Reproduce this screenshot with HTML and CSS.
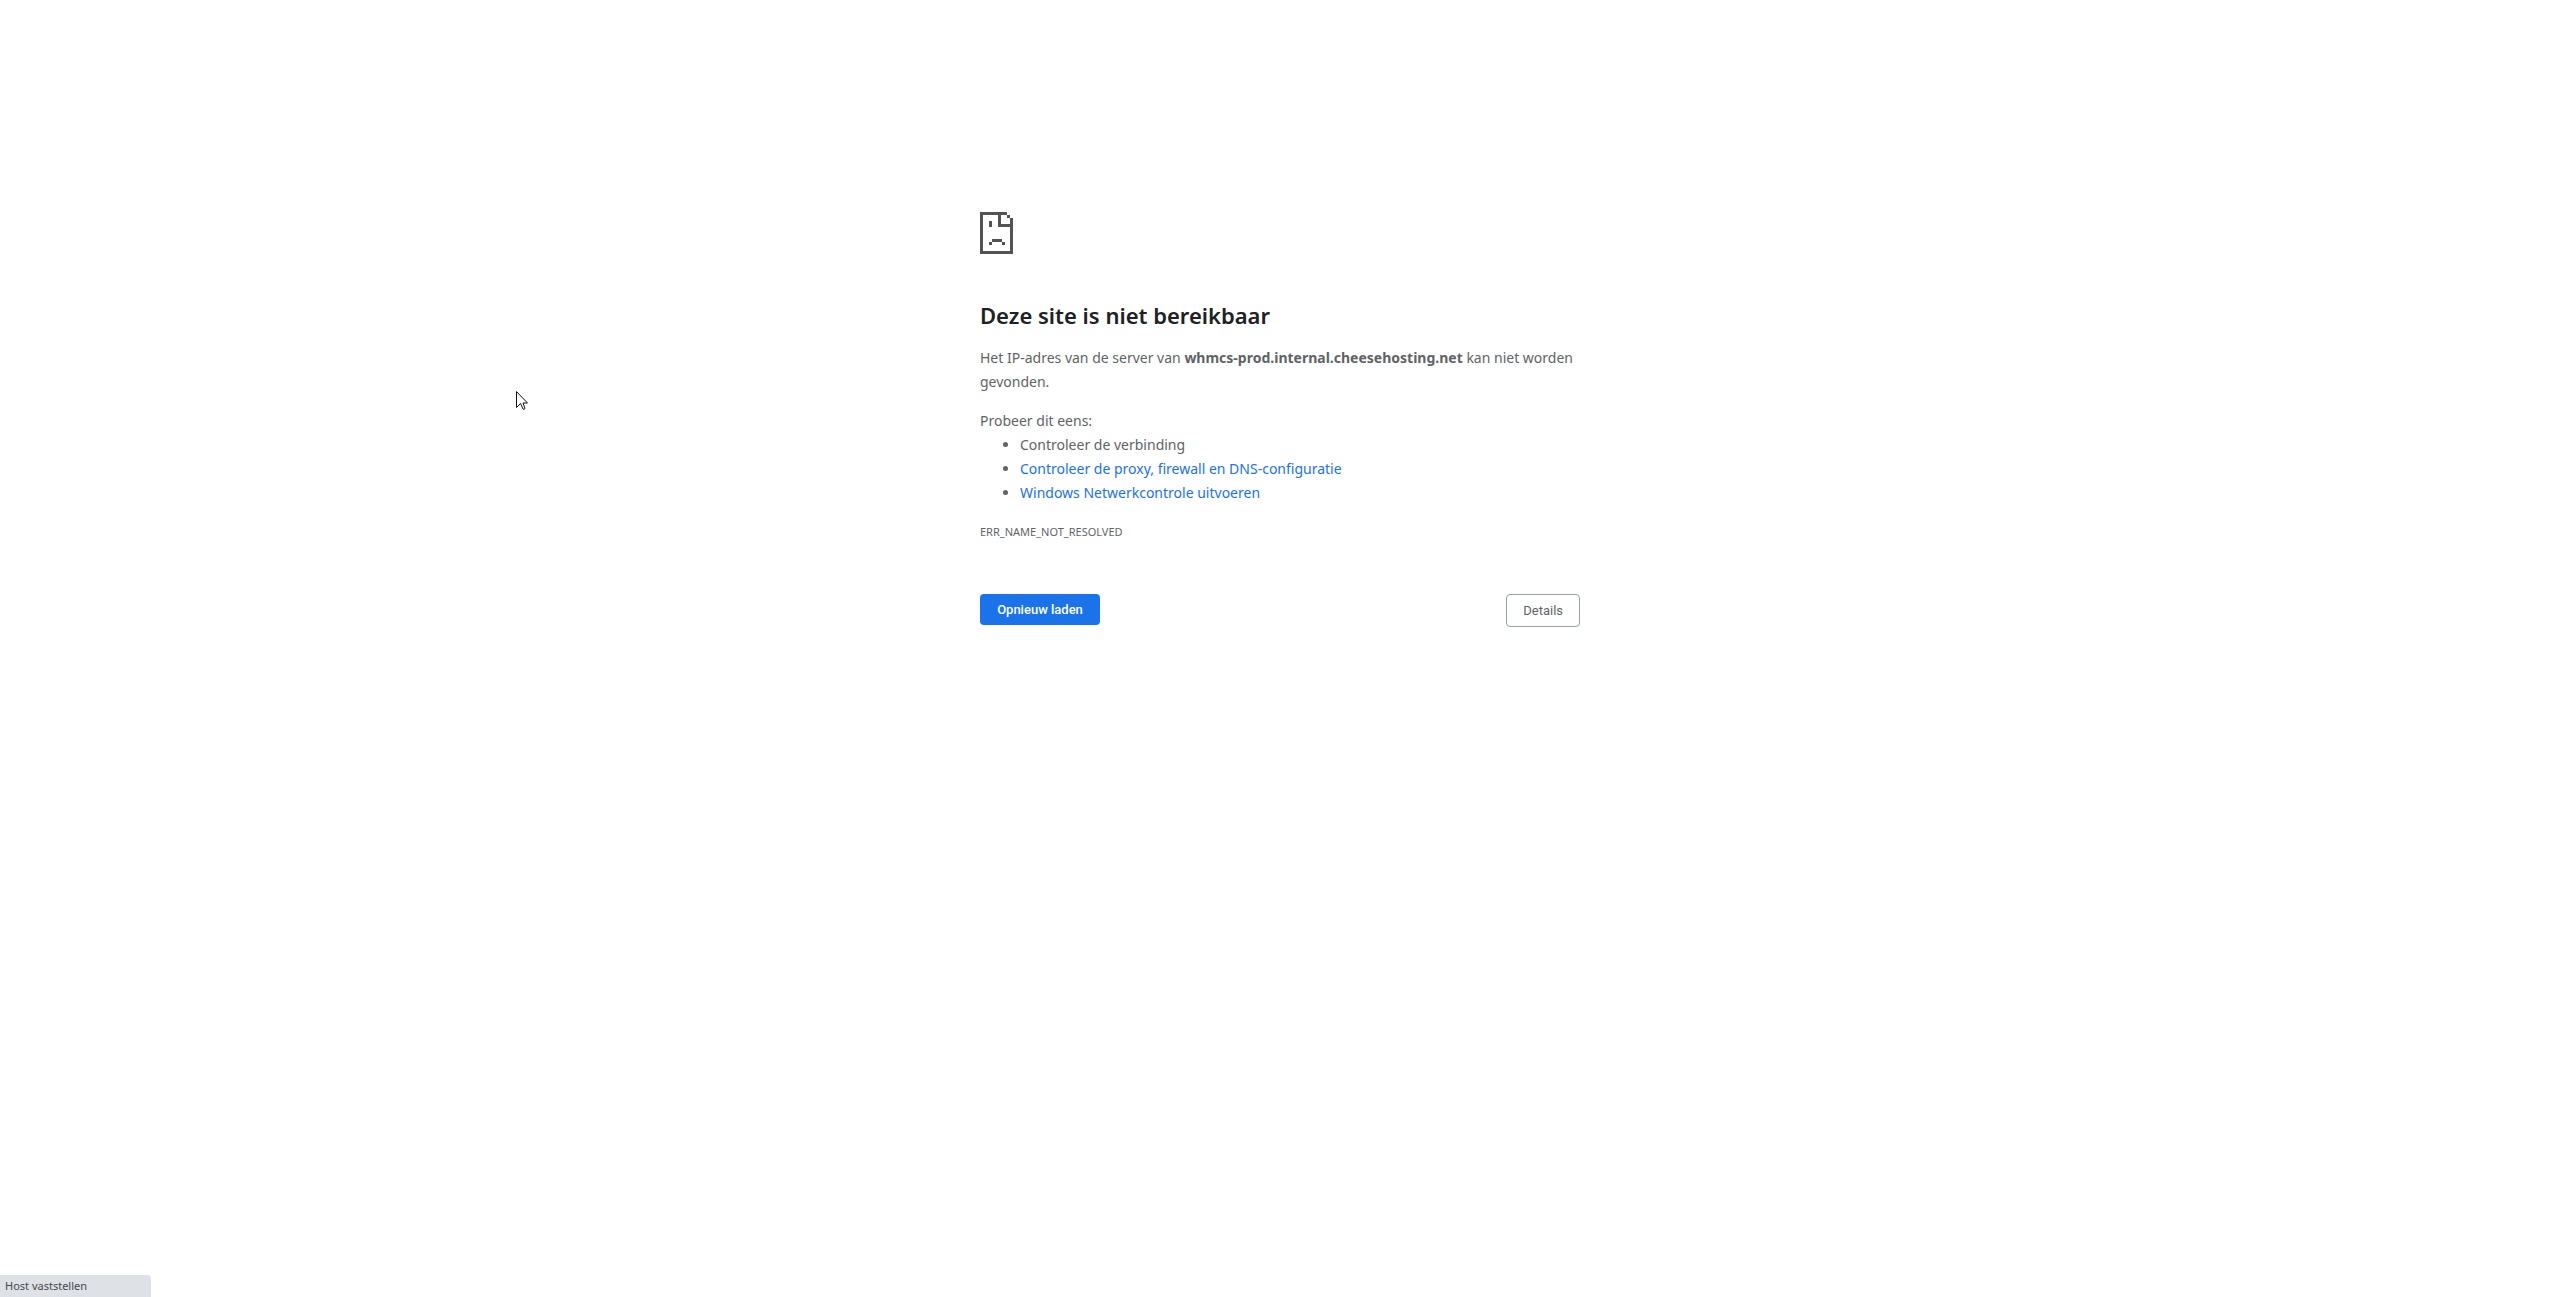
FILE: index.html
```html
<!DOCTYPE html>
<html lang="nl">
<head>
<meta charset="utf-8">
<meta name="viewport" content="width=device-width, initial-scale=1">
<title>Deze site is niet bereikbaar</title>
<link rel="stylesheet" href="styles.css">
</head>
<body>
<main class="error">
  <svg class="error-icon" viewBox="0 0 33 42" shape-rendering="crispEdges" aria-hidden="true">
    <path d="M0 0h27v3h3v3h3v36H0zM3 3v36h27V15H18V3zM21 3v9h9V6h-3V3zM9 9h3v6H9zM12 27h10v3H12zM9 30h3v3H9zM22 30h3v3h-3z" fill="#535353" fill-rule="evenodd"/>
  </svg>
  <h1 class="title">Deze site is niet bereikbaar</h1>
  <p class="summary">Het IP-adres van de server van <strong>whmcs-prod.internal.cheesehosting.net</strong> kan niet worden gevonden.</p>
  <div class="suggestions">
    <p class="suggestions-label">Probeer dit eens:</p>
    <ul class="suggestions-list">
      <li>Controleer de verbinding</li>
      <li><a href="#proxy">Controleer de proxy, firewall en DNS-configuratie</a></li>
      <li><a href="#diagnose">Windows Netwerkcontrole uitvoeren</a></li>
    </ul>
  </div>
  <p class="error-code">ERR_NAME_NOT_RESOLVED</p>
  <div class="actions">
    <button class="button button-primary" type="button">Opnieuw laden</button>
    <button class="button button-secondary" type="button">Details</button>
  </div>
</main>
<div class="status">Host vaststellen</div>
<svg class="pointer" viewBox="0 0 12 20" aria-hidden="true">
  <path d="M.5 .5v16l4-4 2.500 5.500q1 1 2-.5l-2-5.500h4.500z" fill="#fff" stroke="#111" />
</svg>
</body>
</html>
```
FILE: styles.css
```css
* {
  box-sizing: border-box;
}

body {
  margin: 0;
  background: #fff;
  color: #5f6368;
  font: 14px/24px "Noto Sans", "Open Sans", sans-serif;
}

h1,
p,
ul {
  margin: 0;
}

a {
  color: #1a73e8;
  text-decoration: none;
}

.error {
  max-width: 600px;
  margin: 0 auto;
  padding-top: 212px;
}

.error-icon {
  display: block;
  width: 33px;
  height: 42px;
}

.title {
  margin: 46px 0 16px;
  color: #202124;
  font-size: 22px;
  font-weight: 600;
  line-height: 30px;
}

.suggestions,
.error-code {
  margin-top: 15px;
}

.suggestions-list {
  padding-left: 40px;
}

.error-code {
  font-size: 11px;
}

.actions {
  display: flex;
  justify-content: space-between;
  align-items: flex-start;
  margin-top: 50px;
}

.button {
  padding: 8px 16px;
  border: 0;
  border-radius: 4px;
  font: 500 13px/15px Roboto, sans-serif;
}

.button-primary {
  min-width: 120px;
  background: #1a73e8;
  color: #fff;
}

.button-secondary {
  border: 1px solid #9aa0a6;
  background: #fff;
  color: #5f6368;
  font-weight: 400;
}

.status {
  position: fixed;
  left: 0;
  bottom: 0;
  width: 151px;
  padding-left: 5px;
  border-top-right-radius: 4px;
  background: #dee1e6;
  color: #46484c;
  font-size: 11px;
  line-height: 22px;
}

.pointer {
  position: absolute;
  left: 516px;
  top: 391px;
  width: 12px;
  height: 20px;
}
```
